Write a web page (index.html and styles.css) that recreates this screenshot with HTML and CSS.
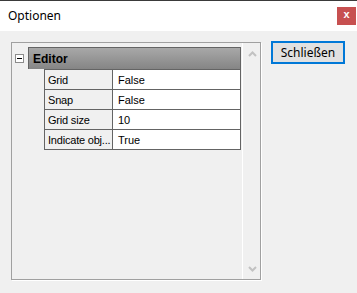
FILE: index.html
```html
<!DOCTYPE html>
<html>
<head>
<meta charset="utf-8">
<link rel="stylesheet" href="styles.css">
</head>
<body>
<div class="window">
  <div class="topline"></div>
  <div class="titlebar">
    <span class="title">Optionen</span>
    <div class="close">x</div>
  </div>
  <div class="content">
    <div class="panel">
      <div class="grid">
        <div class="category">
          <div class="gutter"><div class="minus"></div></div>
          <div class="cathead">Editor</div>
        </div>
        <div class="rows">
          <div class="row"><div class="name">Grid</div><div class="value">False</div></div>
          <div class="row"><div class="name">Snap</div><div class="value">False</div></div>
          <div class="row"><div class="name">Grid size</div><div class="value">10</div></div>
          <div class="row"><div class="name">Indicate obj...</div><div class="value">True</div></div>
        </div>
      </div>
      <div class="scrollbar">
        <svg class="arrow" width="9" height="6" viewBox="0 0 9 6"><path d="M1 5 L4.5 1.5 L8 5" fill="none" stroke="#c2c2c2" stroke-width="2"/></svg>
        <svg class="arrow" width="9" height="6" viewBox="0 0 9 6"><path d="M1 1 L4.5 4.5 L8 1" fill="none" stroke="#c2c2c2" stroke-width="2"/></svg>
      </div>
    </div>
    <div class="side">
      <button class="btn">Schließen</button>
    </div>
  </div>
</div>
</body>
</html>
```
FILE: styles.css
```css
html, body {
  margin: 0;
  padding: 0;
  background: #f0f0f0;
}
.window {
  width: 357px;
  height: 293px;
  display: flex;
  flex-direction: column;
  background: #f0f0f0;
  font-family: "Liberation Sans", Arial, sans-serif;
}
.topline {
  height: 1px;
  background: #3a3a3a;
}
.titlebar {
  height: 30px;
  background: #ffffff;
  display: flex;
  align-items: center;
  justify-content: space-between;
  padding-left: 8px;
  padding-right: 1px;
  box-sizing: border-box;
}
.title {
  font-family: "Noto Sans", "Open Sans", sans-serif;
  font-size: 12px;
  color: #000;
  margin-top: -1px;
}
.close {
  width: 19px;
  height: 18px;
  margin-top: -1px;
  background: #c75050;
  color: #fff;
  font-weight: bold;
  font-size: 11px;
  display: flex;
  align-items: center;
  justify-content: center;
  line-height: 1;
  padding-bottom: 2px;
  box-sizing: border-box;
}
.content {
  display: flex;
  padding: 11px 0 0 11px;
}
.panel {
  width: 250px;
  height: 238px;
  box-sizing: border-box;
  border: 1px solid #a0a0a0;
  box-shadow: 1px 1px 0 #ffffff;
  display: flex;
}
.grid {
  width: 230px;
  padding-top: 4px;
  box-sizing: border-box;
}
.category {
  display: flex;
  height: 22px;
}
.gutter {
  width: 16px;
  display: flex;
  align-items: flex-start;
  justify-content: center;
  padding-top: 7px;
  box-sizing: border-box;
}
.minus {
  width: 9px;
  height: 9px;
  box-sizing: border-box;
  border: 1px solid #8c8c8c;
  background: #fff;
  position: relative;
  margin-left: -2px;
}
.minus::after {
  content: "";
  position: absolute;
  left: 1px;
  top: 3px;
  width: 5px;
  height: 1px;
  background: #000;
}
.cathead {
  flex: 1;
  box-sizing: border-box;
  border: 1px solid #646464;
  border-bottom: none;
  margin-right: 1px;
  background: linear-gradient(#a8a8a8, #858585);
  font-weight: bold;
  font-size: 12px;
  color: #000;
  padding-left: 4px;
  display: flex;
  align-items: center;
}
.rows {
  margin-left: 32px;
  margin-right: 1px;
  border-bottom: 1px solid #646464;
}
.row {
  display: flex;
  height: 20px;
  border-top: 1px solid #646464;
  border-left: 1px solid #646464;
  border-right: 1px solid #646464;
  box-sizing: border-box;
  font-size: 11px;
  color: #000;
}
.name {
  width: 68px;
  background: #f0f0f0;
  border-right: 1px solid #646464;
  padding-left: 3px;
  box-sizing: border-box;
  display: flex;
  align-items: center;
  white-space: nowrap;
  letter-spacing: -0.2px;
}
.value {
  flex: 1;
  background: #ffffff;
  padding-left: 5px;
  display: flex;
  align-items: center;
}
.scrollbar {
  width: 18px;
  border-left: 1px solid #ffffff;
  box-sizing: border-box;
  display: flex;
  flex-direction: column;
  justify-content: space-between;
  align-items: center;
  padding: 8px 0 7px 1px;
}
.side {
  padding-left: 10px;
}
.btn {
  width: 74px;
  height: 23px;
  margin-top: -1px;
  background: #e1e1e1;
  border: 2px solid #0078d7;
  font-family: "Noto Sans", "Open Sans", sans-serif;
  font-size: 12px;
  color: #000;
  padding: 0;
  line-height: 1;
}
```
